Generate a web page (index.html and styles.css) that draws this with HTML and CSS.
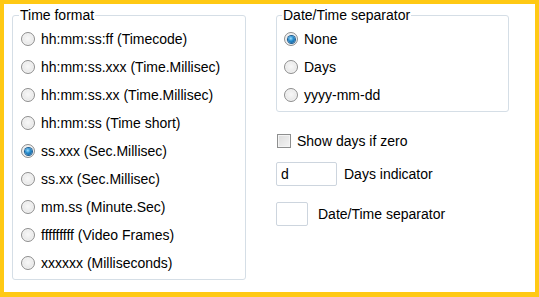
FILE: index.html
```html
<!DOCTYPE html>
<html>
<head>
<meta charset="utf-8">
<link rel="stylesheet" href="styles.css">
</head>
<body>
<div class="frame">
  <fieldset class="group left">
    <legend>Time format</legend>
    <div class="row"><span class="radio"></span><span class="label">hh:mm:ss:ff (Timecode)</span></div>
    <div class="row"><span class="radio"></span><span class="label">hh:mm:ss.xxx (Time.Millisec)</span></div>
    <div class="row"><span class="radio"></span><span class="label">hh:mm:ss.xx (Time.Millisec)</span></div>
    <div class="row"><span class="radio"></span><span class="label">hh:mm:ss (Time short)</span></div>
    <div class="row"><span class="radio on"></span><span class="label">ss.xxx (Sec.Millisec)</span></div>
    <div class="row"><span class="radio"></span><span class="label">ss.xx (Sec.Millisec)</span></div>
    <div class="row"><span class="radio"></span><span class="label">mm.ss (Minute.Sec)</span></div>
    <div class="row"><span class="radio"></span><span class="label">fffffffff (Video Frames)</span></div>
    <div class="row"><span class="radio"></span><span class="label">xxxxxx (Milliseconds)</span></div>
  </fieldset>
  <div class="col">
    <fieldset class="group right">
      <legend>Date/Time separator</legend>
      <div class="row"><span class="radio on"></span><span class="label">None</span></div>
      <div class="row"><span class="radio"></span><span class="label">Days</span></div>
      <div class="row"><span class="radio"></span><span class="label">yyyy-mm-dd</span></div>
    </fieldset>
    <div class="check-row"><span class="check"></span><span class="label">Show days if zero</span></div>
    <div class="field-row"><span class="input wide">d</span><span class="label">Days indicator</span></div>
    <div class="field-row second"><span class="input narrow"></span><span class="label">Date/Time separator</span></div>
  </div>
</div>
</body>
</html>
```
FILE: styles.css
```css
html, body {
  margin: 0;
  padding: 0;
  background: #ffffff;
}
.frame {
  box-sizing: border-box;
  width: 539px;
  height: 297px;
  border: 4px solid #ffc914;
  border-bottom-width: 5px;
  background: #ffffff;
  display: flex;
  align-items: flex-start;
  padding: 3px 0 0 8px;
  font-family: "Liberation Sans", Arial, sans-serif;
  font-size: 14px;
  color: #000000;
}
.group {
  margin: 0;
  border: 1px solid #d5dee6;
  border-radius: 3px;
  padding: 2px 0 2px 8px;
  box-sizing: border-box;
}
.group legend {
  padding: 0 1px;
  margin-left: -2px;
  line-height: 16px;
  height: 16px;
}
.left {
  width: 234px;
  height: 273px;
}
.col {
  margin-left: 30px;
  display: flex;
  flex-direction: column;
}
.right {
  width: 233px;
  height: 105px;
  padding-left: 7px;
}
.row {
  height: 28px;
  display: flex;
  align-items: center;
}
.radio {
  box-sizing: border-box;
  width: 14px;
  height: 14px;
  border-radius: 50%;
  border: 1px solid #8e8e8e;
  background: radial-gradient(circle at 50% 45%, #f8f8f8 0, #ececec 50%, #cfcfcf 100%);
  box-shadow: inset 0 0 0 1px #f4f4f4;
  margin-right: 6px;
  flex: none;
  display: flex;
  align-items: center;
  justify-content: center;
}
.radio.on::after {
  content: "";
  width: 7px;
  height: 7px;
  border-radius: 50%;
  background: radial-gradient(circle at 40% 35%, #9fe0ff 0, #2a8fd0 40%, #0b4f88 100%);
  box-shadow: 0 0 0 1px #1e5f94;
}
.label {
  white-space: nowrap;
  line-height: 16px;
}
.check-row {
  margin-top: 22px;
  display: flex;
  align-items: center;
  height: 14px;
}
.check {
  box-sizing: border-box;
  width: 14px;
  height: 14px;
  border: 1px solid #8e8f8f;
  background: linear-gradient(135deg, #dcdcdc, #f4f4f4);
  box-shadow: inset 0 0 0 1px #f4f4f4;
  margin-left: 1px;
  margin-right: 6px;
}
.field-row {
  margin-top: 14px;
  display: flex;
  align-items: center;
}
.field-row.second {
  margin-top: 16px;
}
.input {
  box-sizing: border-box;
  height: 24px;
  border: 1px solid #cdd5de;
  border-radius: 2px;
  background: #fff;
  line-height: 22px;
  padding-left: 4px;
  margin-right: 7px;
}
.input.wide {
  width: 61px;
}
.input.narrow {
  width: 32px;
  margin-right: 10px;
}
```
